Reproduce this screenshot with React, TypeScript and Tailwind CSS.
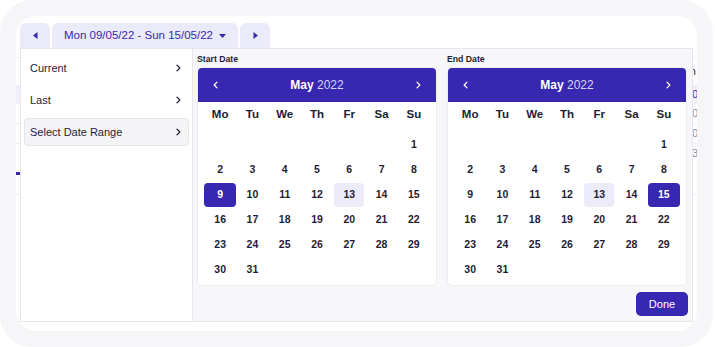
import React from 'react';

const font = { fontFamily: '"Liberation Sans", Arial, sans-serif' };

const days = ['Mo', 'Tu', 'We', 'Th', 'Fr', 'Sa', 'Su'];

// May 2022 starts on a Sunday
const cells: (number | null)[] = [null, null, null, null, null, null, ...Array.from({ length: 31 }, (_, i) => i + 1)];

const Chevron = ({ className = '' }: { className?: string }) => (
  <svg width="6" height="9" viewBox="0 0 6 9" className={className}>
    <path d="M1.2 1 L4.6 4.5 L1.2 8" fill="none" stroke="currentColor" strokeWidth="1.5" strokeLinecap="round" strokeLinejoin="round" />
  </svg>
);

const Calendar: React.FC<{ label: string; selected: number; today: number }> = ({ label, selected, today }) => (
  <div className="w-[240px] flex flex-col">
    <div className="h-[12px] mb-[2px] text-[8.7px] font-bold leading-[12px] text-[#1f1d33]">{label}</div>
    <div className="bg-white rounded-[5px] border border-[#ececf1] overflow-hidden">
      <div className="h-[34px] bg-[#3827b1] flex items-center justify-between px-[15px] text-white">
        <Chevron className="rotate-180 w-[5px] h-[8px]" />
        <div className="text-[12px] leading-none">
          <span className="font-bold">May</span> <span className="font-light text-[#d9d5f6]">2022</span>
        </div>
        <Chevron className="w-[5px] h-[8px]" />
      </div>
      <div className="px-[6px] pb-[3px]">
        <div className="grid grid-cols-7 h-[26px] items-center text-center text-[11.5px] font-bold text-[#1f1d33]">
          {days.map(d => <div key={d}>{d}</div>)}
        </div>
        <div className="grid grid-cols-7 pt-[4px] text-center text-[10.5px] font-bold text-[#1f1d33]">
          {cells.map((c, i) => (
            <div key={i} className="h-[25px] flex items-center justify-center">
              {c === null ? null : c === selected ? (
                <span className="w-[34px] h-[24px] rounded-[4px] bg-[#3827b1] text-white flex items-center justify-center">{c}</span>
              ) : c === today ? (
                <span className="w-[30px] h-[24px] rounded-[4px] bg-[#ecebfa] flex items-center justify-center">{c}</span>
              ) : (
                <span>{c}</span>
              )}
            </div>
          ))}
        </div>
      </div>
    </div>
  </div>
);

const MenuItem: React.FC<{ label: string; active?: boolean }> = ({ label, active }) => (
  <div
    className={`h-[28px] flex items-center justify-between pl-[5px] pr-[7px] rounded-[4px] text-[11px] text-[#1f1d33] ${
      active ? 'bg-[#f4f4f7] border border-[#e3e3ea]' : 'border border-transparent'
    }`}
  >
    <span>{label}</span>
    <Chevron className="w-[5px] h-[8px]" />
  </div>
);

export default function App() {
  return (
    <div className="w-[715px] h-[347px] bg-white" style={font}>
      <div className="w-[713px] h-[347px] rounded-[32px] bg-[#f6f6f9] p-4">
        <div className="relative h-full rounded-[20px] bg-white overflow-hidden">
          {/* page behind the popup */}
          <div className="pt-[41px]">
            <div className="border-t border-[#ececf1] h-[28px] flex items-center justify-end pr-[1px] text-[11px] text-[#1f1d33]">Plan</div>
            <div className="h-[18px] bg-[#efeefb] border-t border-[#ececf1] flex items-center pl-[676px] text-[11px] text-[#3827b1]">0(</div>
            {['0(', '0(', '30'].map((t, i) => (
              <div key={i} className="h-[20px] border-t border-[#ececf1] flex items-center pl-[676px] text-[11px] text-[#8a889a]">{t}</div>
            ))}
            <div className="h-[9px]" />
            <div className="w-[5px] h-[3px] bg-[#3827b1]" />
            <div className="h-[20px] border-b border-[#ececf1]" />
          </div>

          {/* date range popup */}
          <div className="absolute left-[4px] top-[7px]">
            <div className="flex gap-[2px] h-[25px]">
              <button className="w-[30px] rounded-t-[6px] bg-[#ebeaf8] flex items-center justify-center text-[#3827b1]">
                <svg width="5" height="7" viewBox="0 0 5 7"><path d="M4.5 0 L0 3.5 L4.5 7 Z" fill="currentColor" /></svg>
              </button>
              <button className="w-[186px] rounded-t-[6px] bg-[#ebeaf8] flex items-center justify-center gap-[6px] text-[11.5px] text-[#3827b1]">
                <span>Mon 09/05/22 - Sun 15/05/22</span>
                <svg width="7" height="4" viewBox="0 0 7 4"><path d="M0 0 L7 0 L3.5 4 Z" fill="currentColor" /></svg>
              </button>
              <button className="w-[30px] rounded-t-[6px] bg-[#ebeaf8] flex items-center justify-center text-[#3827b1]">
                <svg width="5" height="7" viewBox="0 0 5 7"><path d="M0.5 0 L5 3.5 L0.5 7 Z" fill="currentColor" /></svg>
              </button>
            </div>
            <div className="w-[673px] h-[274px] flex border border-[#e6e6ec] bg-white">
              <div className="w-[172px] border-r border-[#e6e6ec] px-[3px] pt-[5px] flex flex-col gap-[4px]">
                <MenuItem label="Current" />
                <MenuItem label="Last" />
                <MenuItem label="Select Date Range" active />
              </div>
              <div className="flex-1 bg-[#f7f7f9] px-[4px] pt-[4px] flex flex-col">
                <div className="flex gap-[10px]">
                  <Calendar label="Start Date" selected={9} today={13} />
                  <Calendar label="End Date" selected={15} today={13} />
                </div>
                <div className="flex justify-end mt-[6px]">
                  <button className="w-[52px] h-[24px] rounded-[5px] bg-[#3827b1] text-white text-[11px]">Done</button>
                </div>
              </div>
            </div>
          </div>
        </div>
      </div>
    </div>
  );
}
